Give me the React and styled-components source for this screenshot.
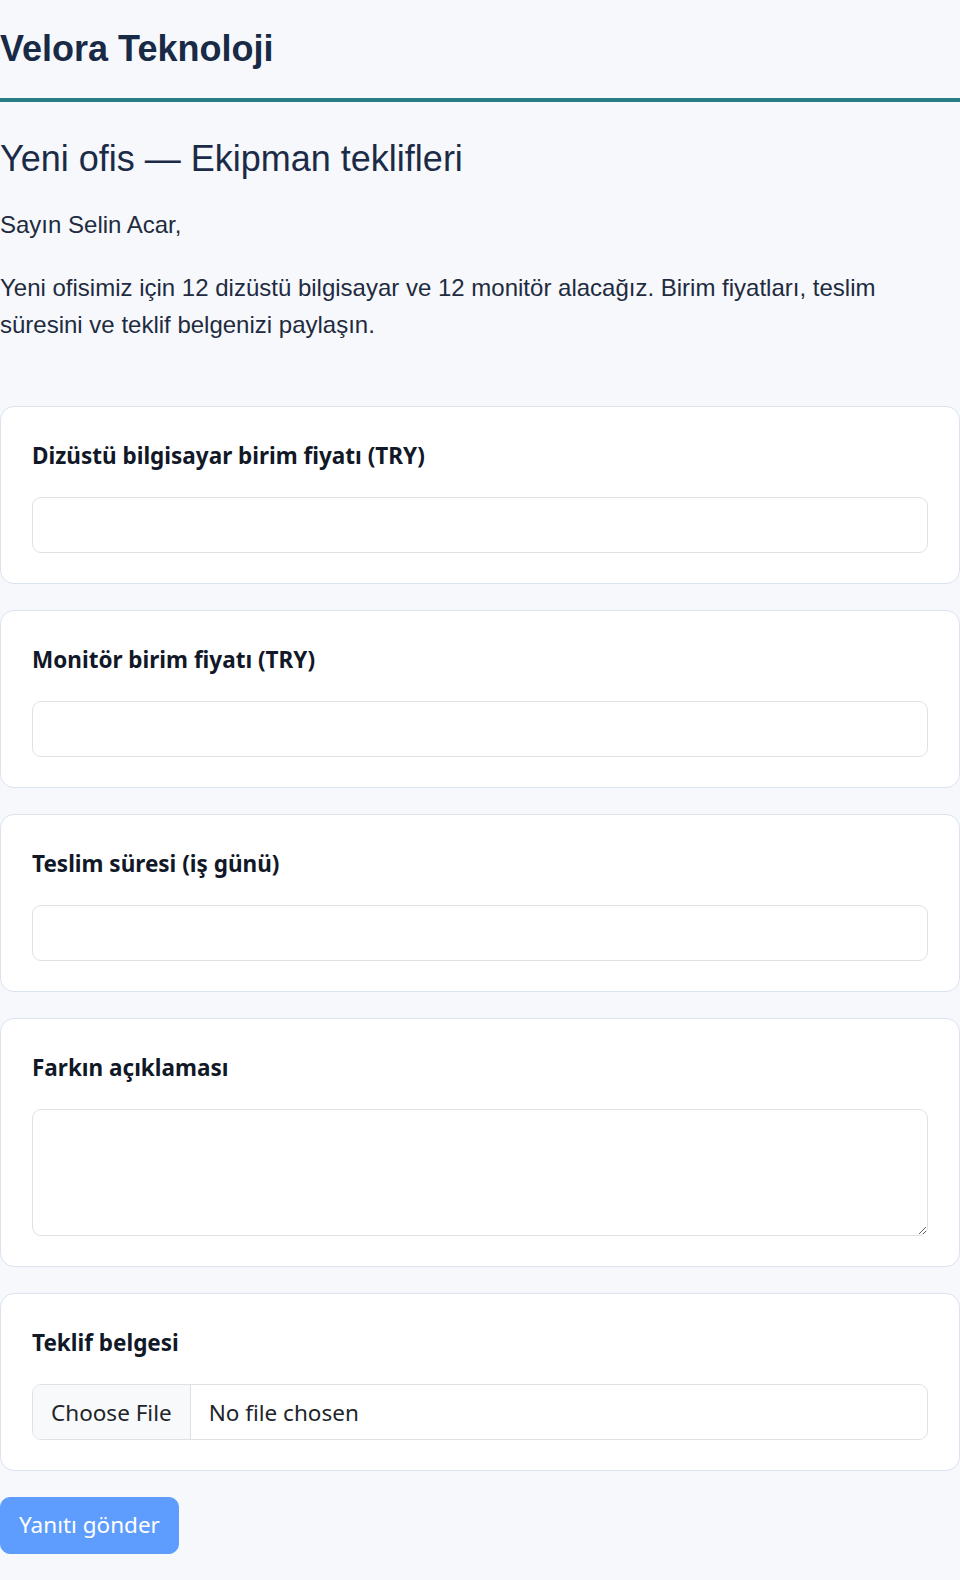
import React from 'react';
import styled, { createGlobalStyle } from 'styled-components';

const GlobalStyle = createGlobalStyle`
  body {
    margin: 0;
    background-color: #f6f8fb;
    font-family: 'Liberation Sans', Arial, sans-serif;
    color: #1d2a3f;
  }
`;

const Header = styled.header`
  padding: 27px 0 28px;
  border-bottom: 4px solid #2a7c85;
`;

const Brand = styled.h1`
  margin: 0;
  font-size: 36px;
  line-height: 1.2;
  font-weight: 700;
  color: #182a46;
`;

const Main = styled.main`
  padding-top: 35px;
  padding-bottom: 40px;
`;

const Title = styled.h2`
  margin: 0 0 26px;
  font-size: 36px;
  line-height: 1.2;
  font-weight: 400;
  color: #1b2b47;
`;

const Text = styled.p`
  margin: 0 0 ${({ last }) => (last ? '63px' : '25px')};
  font-size: 24px;
  line-height: 1.55;
  color: #1f2b40;
`;

const Form = styled.form`
  display: flex;
  flex-direction: column;
  gap: 26px;
`;

const Card = styled.div`
  background-color: #fff;
  border: 1px solid #dbe3ef;
  border-radius: 14px;
  padding: 32px 31px 30px;
`;

const Label = styled.label`
  display: block;
  margin-bottom: 24px;
  font-family: 'Noto Sans', sans-serif;
  font-size: 22.5px;
  line-height: 34px;
  font-weight: 700;
  font-variant-ligatures: none;
  color: #111827;
`;

const fieldStyles = `
  display: block;
  width: 100%;
  box-sizing: border-box;
  border: 1px solid #dee2e6;
  border-radius: 9px;
  background-color: #fff;
  font-family: 'Noto Sans', sans-serif;
  font-size: 22.5px;
  line-height: 1.6;
  color: #212529;
  outline: none;
`;

const Input = styled.input`
  ${fieldStyles}
  height: 56px;
  padding: 9px 18px;
`;

const TextArea = styled.textarea`
  ${fieldStyles}
  height: 127px;
  padding: 9px 18px;
  resize: vertical;
`;

const FileInput = styled.input`
  ${fieldStyles}
  height: 56px;
  padding: 9px 18px;
  overflow: hidden;

  &::file-selector-button {
    margin: -9px 18px -9px -18px;
    padding: 9px 18px;
    height: 56px;
    border: 0;
    border-right: 1px solid #dee2e6;
    border-radius: 0;
    background-color: #f8f9fa;
    font: inherit;
    color: #212529;
  }
`;

const SubmitButton = styled.button`
  align-self: flex-start;
  height: 57px;
  padding: 0 18px;
  border: 1px solid #5e9dfd;
  border-radius: 10px;
  background-color: #5e9dfd;
  color: #fff;
  font-family: 'Noto Sans', sans-serif;
  font-size: 22.5px;
  line-height: 1.6;
  cursor: default;
`;

const fields = [
  { id: 'laptop', label: 'Dizüstü bilgisayar birim fiyatı (TRY)' },
  { id: 'monitor', label: 'Monitör birim fiyatı (TRY)' },
  { id: 'delivery', label: 'Teslim süresi (iş günü)' },
];

export default function App() {
  return (
    <>
      <GlobalStyle />
      <Header>
        <Brand>Velora Teknoloji</Brand>
      </Header>
      <Main>
        <Title>Yeni ofis — Ekipman teklifleri</Title>
        <Text>Sayın Selin Acar,</Text>
        <Text last>
          Yeni ofisimiz için 12 dizüstü bilgisayar ve 12 monitör alacağız. Birim fiyatları, teslim
          süresini ve teklif belgenizi paylaşın.
        </Text>
        <Form onSubmit={(e) => e.preventDefault()}>
          {fields.map((f) => (
            <Card key={f.id}>
              <Label htmlFor={f.id}>{f.label}</Label>
              <Input id={f.id} type="text" />
            </Card>
          ))}
          <Card>
            <Label htmlFor="note">Farkın açıklaması</Label>
            <TextArea id="note" />
          </Card>
          <Card>
            <Label htmlFor="offer">Teklif belgesi</Label>
            <FileInput id="offer" type="file" />
          </Card>
          <SubmitButton type="submit" disabled>Yanıtı gönder</SubmitButton>
        </Form>
      </Main>
    </>
  );
}
